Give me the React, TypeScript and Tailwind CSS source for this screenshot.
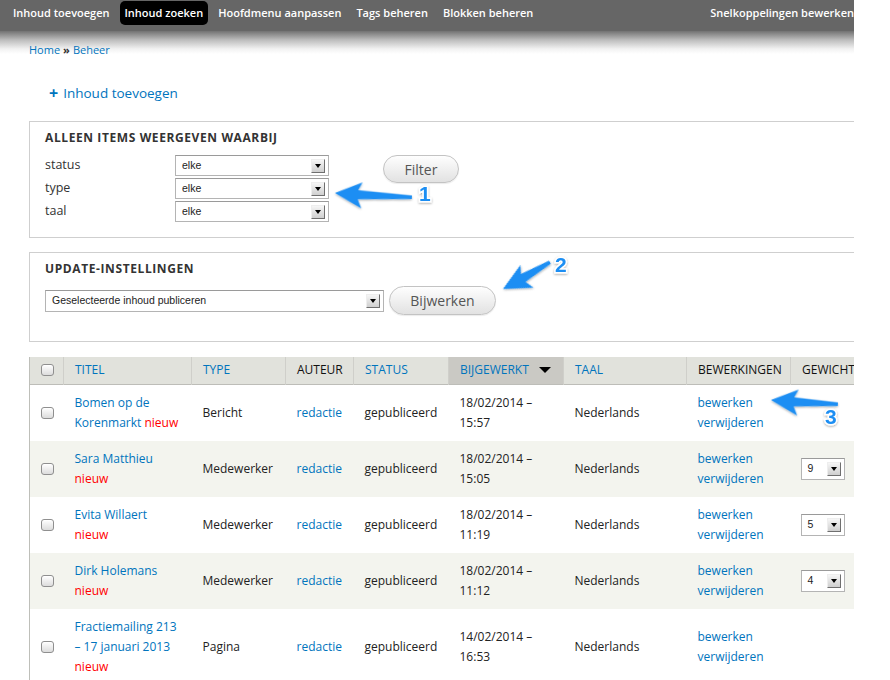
import clsx from "clsx";

const navItems = ["Inhoud toevoegen", "Inhoud zoeken", "Hoofdmenu aanpassen", "Tags beheren", "Blokken beheren"];

type Row = {
  title: string[];
  type: string;
  date: [string, string];
  weight?: string;
};

const rows: Row[] = [
  { title: ["Bomen op de", "Korenmarkt"], type: "Bericht", date: ["18/02/2014 –", "15:57"] },
  { title: ["Sara Matthieu"], type: "Medewerker", date: ["18/02/2014 –", "15:05"], weight: "9" },
  { title: ["Evita Willaert"], type: "Medewerker", date: ["18/02/2014 –", "11:19"], weight: "5" },
  { title: ["Dirk Holemans"], type: "Medewerker", date: ["18/02/2014 –", "11:12"], weight: "4" },
  { title: ["Fractiemailing 213", "– 17 januari 2013"], type: "Pagina", date: ["14/02/2014 –", "16:53"] },
];

function Checkbox() {
  return (
    <span className="block h-[12px] w-[13px] rounded-[3px] border border-[#8f8f8f] bg-gradient-to-b from-white to-[#dcdcdc] shadow-[inset_0_1px_0_#fff]" />
  );
}

function DropBtn() {
  return (
    <span className="flex h-[14px] w-[14px] items-center justify-center border-r border-b border-[#6f6f6f] border-t border-l border-t-[#eee] border-l-[#eee] bg-gradient-to-b from-[#f6f6f6] to-[#cfcfcf]">
      <span className="mt-[1px] block h-0 w-0 border-x-[3.5px] border-t-[4px] border-x-transparent border-t-black" />
    </span>
  );
}

function Select({ value, className }: { value: string; className?: string }) {
  return (
    <div
      className={clsx(
        "flex items-center justify-between border border-[#b4b4b4] border-t-[#9a9a9a] bg-white pl-[6px] pr-[3px] font-['Liberation_Sans',sans-serif] text-[10.5px] text-[#222]",
        className
      )}
    >
      <span>{value}</span>
      <DropBtn />
    </div>
  );
}

function Button({ label, className }: { label: string; className?: string }) {
  return (
    <button
      className={clsx(
        "flex items-center justify-center rounded-full border border-[#c3c3c3] bg-gradient-to-b from-[#fefefe] to-[#e2e2e2] text-[14px] text-[#555] shadow-[0_1px_1px_rgba(0,0,0,0.08)]",
        className
      )}
    >
      {label}
    </button>
  );
}

function Arrow({ x, y, len, angle }: { x: number; y: number; len: number; angle: number }) {
  return (
    <polygon
      transform={`translate(${x} ${y}) rotate(${angle})`}
      points={`0,0 27,-12 23,-4 ${len},-1.5 ${len},2 23,5 27,14`}
      fill="#1c8ef3"
      filter="url(#sh)"
    />
  );
}

function Num({ x, y, n }: { x: number; y: number; n: string }) {
  return (
    <text
      x={x}
      y={y}
      fontFamily="Liberation Sans, Arial, sans-serif"
      fontWeight="bold"
      fontSize="21"
      fill="#1c8ef3"
      stroke="#fff"
      strokeWidth="3"
      paintOrder="stroke"
      filter="url(#sh)"
    >
      {n}
    </text>
  );
}

export default function App() {
  const th = "h-[27px] border-r border-[#cfcfca] px-[11px] text-left align-middle font-normal uppercase text-[12px]";
  return (
    <div className="relative h-[680px] w-[890px] overflow-hidden bg-white font-['Open_Sans',sans-serif] text-[#222]">
      <div className="w-[854px] overflow-hidden">
        {/* toolbar */}
        <div className="flex h-[31px] items-start bg-[#666] pl-[8px] pt-[1px]">
          <div className="flex gap-[5px]">
            {navItems.map((item) => (
              <span
                key={item}
                className={clsx(
                  "flex h-[24px] items-center rounded-[5px] px-[5px] text-[11px] font-semibold text-white",
                  item === "Inhoud zoeken" && "bg-black"
                )}
              >
                {item}
              </span>
            ))}
          </div>
          <span className="ml-auto flex h-[24px] items-center text-[11px] font-semibold text-white">
            Snelkoppelingen bewerken
          </span>
        </div>

        {/* breadcrumb */}
        <div className="bg-[linear-gradient(to_bottom,#727272,#bdbdbd_9px,#f2f2f2_18px,#fff_23px)] pl-[29px] pt-[12px] text-[11px] leading-[14px]">
          <a className="text-[#0074bd]">Home</a>
          <span className="mx-[3px] font-bold text-[#333]">»</span>
          <a className="text-[#0074bd]">Beheer</a>
        </div>

        <div className="mt-[26px] flex items-center pl-[49px] text-[13.5px] leading-[20px] text-[#0074bd]">
          <span className="mr-[5px] text-[16px] font-bold leading-none">+</span>
          <span>Inhoud toevoegen</span>
        </div>

        {/* filter */}
        <div className="ml-[29px] mt-[18px] w-[840px] border border-[#cfcfcf] pb-[15px] pl-[15px] pt-[8px]">
          <div className="text-[12px] font-bold uppercase leading-[16px] tracking-[0.05em] text-[#333]">
            Alleen items weergeven waarbij
          </div>
          <div className="mt-[9px] flex">
            <div className="flex flex-col gap-[2px]">
              {["status", "type", "taal"].map((l) => (
                <div key={l} className="flex h-[21px] items-center">
                  <span className="w-[130px] text-[12.5px] text-[#333]">{l}</span>
                  <Select value="elke" className="h-[21px] w-[154px]" />
                </div>
              ))}
            </div>
            <Button label="Filter" className="ml-[54px] h-[28px] w-[76px]" />
          </div>
        </div>

        {/* update */}
        <div className="ml-[29px] mt-[14px] w-[840px] border border-[#cfcfcf] pb-[26px] pl-[15px] pt-[8px]">
          <div className="text-[12px] font-bold uppercase leading-[16px] tracking-[0.05em] text-[#333]">
            Update-instellingen
          </div>
          <div className="mt-[9px] flex items-center gap-[5px]">
            <Select value="Geselecteerde inhoud publiceren" className="h-[22px] w-[339px]" />
            <Button label="Bijwerken" className="h-[29px] w-[107px]" />
          </div>
        </div>

        {/* table */}
        <table className="ml-[29px] mt-[15px] w-[841px] table-fixed border-collapse border-l border-[#bebfb9] text-[12px]">
          <colgroup>
            <col className="w-[34px]" />
            <col className="w-[128px]" />
            <col className="w-[94px]" />
            <col className="w-[68px]" />
            <col className="w-[95px]" />
            <col className="w-[115px]" />
            <col className="w-[123px]" />
            <col className="w-[104px]" />
            <col className="w-[80px]" />
          </colgroup>
          <thead>
            <tr className="border-b border-[#bdbdb8] bg-[#e1e2dc]">
              <th className="h-[27px] border-r border-[#cfcfca] pl-[11px] align-middle">
                <Checkbox />
              </th>
              <th className={clsx(th, "text-[#0074bd]")}>Titel</th>
              <th className={clsx(th, "text-[#0074bd]")}>Type</th>
              <th className={clsx(th, "text-[#111]")}>Auteur</th>
              <th className={clsx(th, "text-[#0074bd]")}>Status</th>
              <th className={clsx(th, "bg-[#cac9c4] text-[#0074bd]")}>
                <span className="flex items-center gap-[10px]">
                  Bijgewerkt
                  <span className="block h-0 w-0 border-x-[6px] border-t-[6px] border-x-transparent border-t-black" />
                </span>
              </th>
              <th className={clsx(th, "text-[#0074bd]")}>Taal</th>
              <th className={clsx(th, "text-[#111]")}>Bewerkingen</th>
              <th className={clsx(th, "text-[#111]")}>Gewicht</th>
            </tr>
          </thead>
          <tbody>
            {rows.map((r, i) => (
              <tr key={i} className={i % 2 === 1 ? "bg-[#f3f4ee]" : "bg-white"}>
                <td className="pl-[11px] align-middle">
                  <Checkbox />
                </td>
                <td className="px-[11px] py-[8px] align-middle leading-[20px] text-[#0074bd]">
                  {r.title.map((t, j) => (
                    <div key={j}>
                      {t}
                      {i === 0 && j === 1 && <span className="text-[#f00]"> nieuw</span>}
                    </div>
                  ))}
                  {i !== 0 && <div className="text-[#f00]">nieuw</div>}
                </td>
                <td className="px-[11px] align-middle">{r.type}</td>
                <td className="px-[11px] align-middle text-[#0074bd]">redactie</td>
                <td className="px-[11px] align-middle">gepubliceerd</td>
                <td className="px-[11px] align-middle leading-[20px]">
                  <div>{r.date[0]}</div>
                  <div>{r.date[1]}</div>
                </td>
                <td className="px-[11px] align-middle">Nederlands</td>
                <td className="px-[11px] align-middle leading-[20px] text-[#0074bd]">
                  <div>bewerken</div>
                  <div>verwijderen</div>
                </td>
                <td className="px-[10px] align-middle">
                  {r.weight && <Select value={r.weight} className="h-[22px] w-[44px]" />}
                </td>
              </tr>
            ))}
          </tbody>
        </table>
      </div>

      {/* annotations */}
      <svg className="pointer-events-none absolute left-0 top-0" width="890" height="680">
        <defs>
          <filter id="sh" x="-20%" y="-20%" width="140%" height="160%">
            <feDropShadow dx="0" dy="1" stdDeviation="1.2" floodColor="#000" floodOpacity="0.35" />
          </filter>
        </defs>
        <Arrow x={335} y={193} len={77} angle={3} />
        <Num x={419} y={201} n="1" />
        <Arrow x={503} y={289} len={54} angle={-30} />
        <Num x={555} y={272} n="2" />
        <Arrow x={771} y={400} len={67} angle={3.4} />
        <Num x={825} y={424} n="3" />
      </svg>
    </div>
  );
}
